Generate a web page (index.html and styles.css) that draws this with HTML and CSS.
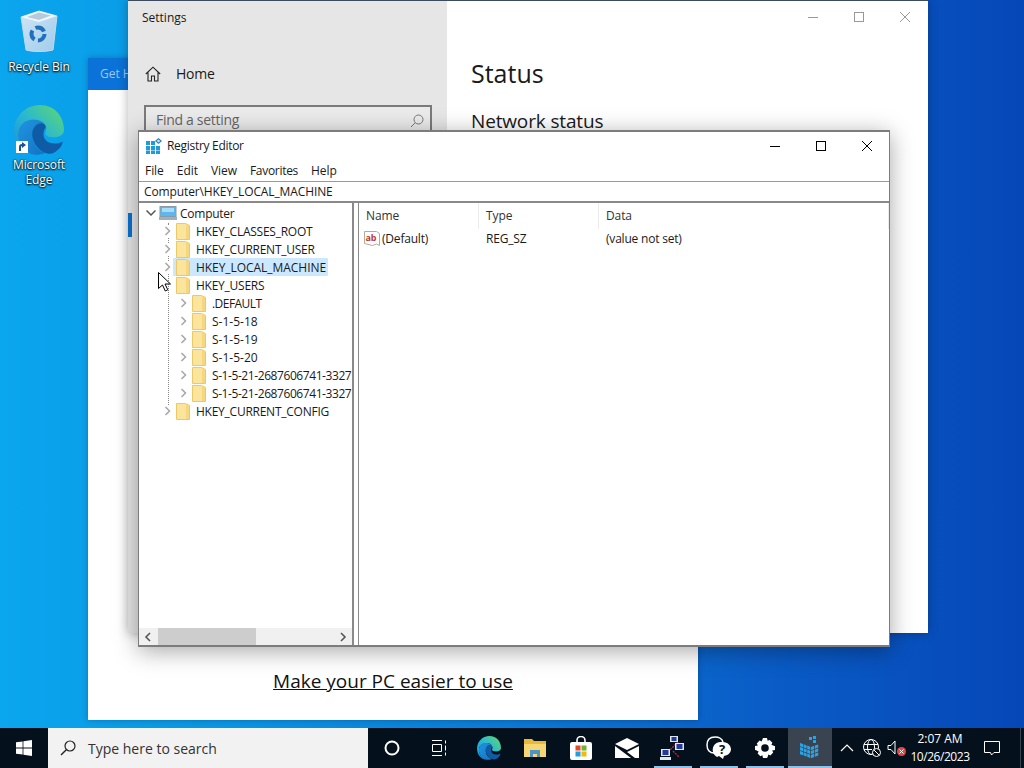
FILE: index.html
```html
<!DOCTYPE html>
<html lang="en">
<head>
<meta charset="utf-8">
<title>Registry Editor</title>
<link rel="stylesheet" href="styles.css">
</head>
<body>
<svg class="defs" width="0" height="0" aria-hidden="true">
  <defs>
    <linearGradient id="edgeTop" x1="0" y1="1" x2="1" y2="0"><stop offset="0" stop-color="#1a8fdc"/><stop offset=".5" stop-color="#2ab8d0"/><stop offset="1" stop-color="#62d96a"/></linearGradient>
    <linearGradient id="edgeLow" x1="0" y1="0" x2="1" y2="1"><stop offset="0" stop-color="#1f95e0"/><stop offset="1" stop-color="#1670c4"/></linearGradient>
    <linearGradient id="binG" x1="0" y1="0" x2="1" y2="1"><stop offset="0" stop-color="#cfe6f6"/><stop offset="1" stop-color="#9fcbea"/></linearGradient>
    <symbol id="edge" viewBox="0 0 48 48">
      <path fill="url(#edgeLow)" d="M4 26C5 19 11 14 18 14c7 0 13 4 13 9-5-4-11-3-13 3-2 8 3 17 12 20-5 2-10 2-14 1C8 43 3 35 4 26z"/>
      <path fill="#0f5ba6" d="M31 20c-3-4-9-3-12 2-4 7 0 18 9 23 4 2 9 3 13-1 3-2 5-5 6-9-2 1-5 2-8 2-9 0-14-7-8-17z"/>
      <path fill="url(#edgeTop)" d="M0 25C0 11 11 0 25 0c14 0 23 11 23 24 0 4-4 7-10 7-5 0-8-2-8-4 0-1 1-2 1-4 0-5-5-9-12-9C11 14 5 19 4 26c-1 9 4 17 12 21C7 45 0 36 0 25z"/>
    </symbol>
    <symbol id="folder" viewBox="0 0 14 18">
      <path fill="#fbe59c" stroke="#ecc968" d="M.5 1.500h9l4 2v14H.5z"/>
      <path fill="#f6d77f" d="M10 2l3 1.500V17h-3z"/>
    </symbol>
    <symbol id="chevR" viewBox="0 0 10 12"><path fill="none" stroke="#a6a6a6" stroke-width="1.500" d="M3.500 2 7.500 6 3.500 10"/></symbol>
  </defs>
</svg>

<main class="desktop">
  <div class="shortcut recycle">
    <svg class="bin" viewBox="0 0 42 44" width="42" height="44"><path fill="url(#binG)" stroke="#c2dbee" d="M3 8 21 2l18 5-4 34c-8 2-20 2-27 0z"/><path fill="#eef7fd" d="M3 8l18 5 18-6-18-5z"/><path fill="#7f9db8" d="M9 8l12 3 12-4.500-12-3z" opacity=".5"/><circle cx="20" cy="25" r="6.500" fill="none" stroke="#2070bc" stroke-width="4" stroke-dasharray="10 3.600"/></svg>
    <span class="label">Recycle Bin</span>
  </div>
  <div class="shortcut edgeapp">
    <span class="edgewrap">
      <svg class="edgeicon" width="50" height="50"><use href="#edge"/></svg>
      <svg class="arrowbadge" viewBox="0 0 12 12" width="12" height="12"><rect width="12" height="12" fill="#fff"/><path fill="#1a4f9c" d="M3 10V6c0-2 1-3 3-3V1l4 3-4 3V5C5 5 5 6 5 7v3z"/></svg>
    </span>
    <span class="label">Microsoft<br>Edge</span>
  </div>

  <section class="win helpwin">
    <header class="helphead">Get Help</header>
    <div class="helpbody"><a class="helplink">Make your PC easier to use</a></div>
  </section>

  <section class="win settings">
    <aside class="sidebar">
      <div class="settitle">Settings</div>
      <div class="home">
        <svg viewBox="0 0 16 16" width="16" height="16"><path fill="none" stroke="#222" stroke-width="1.100" d="M.8 8 8 1.200 15.200 8M3 6.500V15h3.500v-5h3v5H13V6.500"/></svg>
        <span>Home</span>
      </div>
      <div class="findbox">
        <span>Find a setting</span>
        <svg viewBox="0 0 14 14" width="14" height="14"><circle cx="8.500" cy="5.500" r="4.500" fill="none" stroke="#777"/><path stroke="#777" d="M5.300 8.700 1 13"/></svg>
      </div>
      <div class="navmark"></div>
    </aside>
    <div class="setmain">
      <div class="wincontrols light">
        <svg viewBox="0 0 46 12" width="46" height="12"><path stroke="#999" d="M18 6.500h10"/></svg>
        <svg viewBox="0 0 46 12" width="46" height="12"><rect x="18.500" y="1.500" width="9" height="9" fill="none" stroke="#999"/></svg>
        <svg viewBox="0 0 46 12" width="46" height="12"><path stroke="#999" d="M18 1l10 10M28 1 18 11"/></svg>
      </div>
      <h1 class="status">Status</h1>
      <h2 class="netstatus">Network status</h2>
    </div>
  </section>

  <section class="win regedit">
    <header class="regtitle">
      <svg viewBox="0 0 16 16" width="16" height="16"><g fill="#1f9bd8"><rect x="0" y="3" width="4" height="4"/><rect x="5" y="3" width="4" height="4"/><rect x="0" y="8" width="4" height="4"/><rect x="5" y="8" width="4" height="4"/><rect x="10" y="8" width="4" height="4"/><rect x="0" y="12.500" width="4" height="3.500"/><rect x="5" y="12.500" width="4" height="3.500"/><rect x="10" y="12.500" width="4" height="3.500"/></g><path fill="#2a7fb8" d="M12.500 0 16 3l-3.500 3L9 3z"/><path fill="#bfe8fa" d="M12.500 1.500 14.300 3l-1.800 1.500L10.700 3z"/></svg>
      <span class="regname">Registry Editor</span>
      <div class="wincontrols dark">
        <svg viewBox="0 0 46 12" width="46" height="12"><path stroke="#000" d="M18 6.500h10"/></svg>
        <svg viewBox="0 0 46 12" width="46" height="12"><rect x="18.500" y="1.500" width="9" height="9" fill="none" stroke="#000"/></svg>
        <svg viewBox="0 0 46 12" width="46" height="12"><path stroke="#000" d="M18 1l10 10M28 1 18 11"/></svg>
      </div>
    </header>
    <nav class="menu"><span>File</span><span>Edit</span><span>View</span><span class="fav">Favorites</span><span>Help</span></nav>
    <div class="address">Computer\HKEY_LOCAL_MACHINE</div>
    <div class="panes">
      <div class="treepane">
        <div class="tree">
          <span class="dots"></span>
          <div class="row lvl0">
            <svg class="chev" viewBox="0 0 10 12" width="10" height="12"><path fill="none" stroke="#555" stroke-width="1.500" d="M.5 3.500 5 8l4.500-4.500"/></svg>
            <span class="node">
              <svg class="pc" viewBox="0 0 18 14" width="18" height="14"><rect x="1" y=".5" width="16" height="10" fill="#5bb7ec" stroke="#8a9aa8"/><rect x="3" y="2" width="12" height="4" fill="#a7dcf7"/><rect x="0" y="11" width="18" height="3" fill="#9fb1bf"/></svg>
              <span>Computer</span>
            </span>
          </div>
          <div class="row lvl1"><svg class="chev" width="10" height="12"><use href="#chevR"/></svg><span class="node"><svg class="fold" width="14" height="18"><use href="#folder"/></svg><span>HKEY_CLASSES_ROOT</span></span></div>
          <div class="row lvl1"><svg class="chev" width="10" height="12"><use href="#chevR"/></svg><span class="node"><svg class="fold" width="14" height="18"><use href="#folder"/></svg><span>HKEY_CURRENT_USER</span></span></div>
          <div class="row lvl1"><svg class="chev" width="10" height="12"><use href="#chevR"/></svg><span class="node selected"><svg class="fold" width="14" height="18"><use href="#folder"/></svg><span>HKEY_LOCAL_MACHINE</span></span></div>
          <div class="row lvl1"><span class="chevgap"></span><span class="node"><svg class="fold" width="14" height="18"><use href="#folder"/></svg><span>HKEY_USERS</span></span></div>
          <div class="row lvl2"><svg class="chev" width="10" height="12"><use href="#chevR"/></svg><span class="node"><svg class="fold" width="14" height="18"><use href="#folder"/></svg><span class="dflt">.DEFAULT</span></span></div>
          <div class="row lvl2"><svg class="chev" width="10" height="12"><use href="#chevR"/></svg><span class="node"><svg class="fold" width="14" height="18"><use href="#folder"/></svg><span class="sid">S-1-5-18</span></span></div>
          <div class="row lvl2"><svg class="chev" width="10" height="12"><use href="#chevR"/></svg><span class="node"><svg class="fold" width="14" height="18"><use href="#folder"/></svg><span class="sid">S-1-5-19</span></span></div>
          <div class="row lvl2"><svg class="chev" width="10" height="12"><use href="#chevR"/></svg><span class="node"><svg class="fold" width="14" height="18"><use href="#folder"/></svg><span class="sid">S-1-5-20</span></span></div>
          <div class="row lvl2"><svg class="chev" width="10" height="12"><use href="#chevR"/></svg><span class="node"><svg class="fold" width="14" height="18"><use href="#folder"/></svg><span class="longsid">S-1-5-21-2687606741-3327</span></span></div>
          <div class="row lvl2"><svg class="chev" width="10" height="12"><use href="#chevR"/></svg><span class="node"><svg class="fold" width="14" height="18"><use href="#folder"/></svg><span class="longsid">S-1-5-21-2687606741-3327</span></span></div>
          <div class="row lvl1"><svg class="chev" width="10" height="12"><use href="#chevR"/></svg><span class="node"><svg class="fold" width="14" height="18"><use href="#folder"/></svg><span>HKEY_CURRENT_CONFIG</span></span></div>
        </div>
        <div class="hscroll">
          <svg viewBox="0 0 8 10" width="8" height="10"><path fill="none" stroke="#555" stroke-width="1.600" d="M6 1 2 5l4 4"/></svg>
          <div class="track"><div class="thumb"></div></div>
          <svg viewBox="0 0 8 10" width="8" height="10"><path fill="none" stroke="#555" stroke-width="1.600" d="M2 1l4 4-4 4"/></svg>
        </div>
      </div>
      <div class="listpane">
        <div class="listhead"><span>Name</span><span>Type</span><span>Data</span></div>
        <div class="listrow">
          <span class="namecell">
            <svg viewBox="0 0 16 16" width="16" height="16"><path fill="#fff" stroke="#b9a79c" d="M.5 1.500h12l3 2v12l-3-1.500-4 1.500-8-2z"/><text class="abtext" x="1.500" y="10.500">ab</text></svg>
            <span>(Default)</span>
          </span>
          <span>REG_SZ</span>
          <span>(value not set)</span>
        </div>
      </div>
    </div>
  </section>

  <svg class="cursor" viewBox="0 0 13 20" width="13" height="20"><path fill="#fff" stroke="#000" d="M.5.500v16l4-3.500 2.800 6 2.500-1.200L7 12h5.500z"/></svg>
</main>

<footer class="taskbar">
  <div class="start"><svg viewBox="0 0 16 16" width="16" height="16"><path fill="#fff" d="M0 2.300 6.600 1.400V7.600H0zM7.400 1.300 16 0V7.600H7.400zM0 8.400H6.600V14.600L0 13.700zM7.400 8.400H16V16L7.400 14.700z"/></svg></div>
  <div class="search">
    <svg viewBox="0 0 16 16" width="16" height="16"><circle cx="10" cy="6" r="5" fill="none" stroke="#222" stroke-width="1.200"/><path stroke="#222" stroke-width="1.400" d="M6.300 9.700 1 15"/></svg>
    <span>Type here to search</span>
  </div>
  <div class="tasks">
    <div class="tb cortana"><svg viewBox="0 0 16 16" width="16" height="16"><circle cx="8" cy="8" r="6.500" fill="none" stroke="#fff" stroke-width="2"/></svg></div>
    <div class="tb taskview"><svg viewBox="0 0 16 16" width="16" height="16"><path fill="none" stroke="#fff" d="M1 .5h10M1 15.500h10M1.500 4.500h9v7h-9zM14.500 .5v3M14.500 5.500v5M14.500 12.500v3"/></svg></div>
    <div class="tb edgetb"><svg width="24" height="24"><use href="#edge"/></svg></div>
    <div class="tb"><svg viewBox="0 0 24 20" width="24" height="20"><path fill="#e8b93a" d="M1 1h8l2 2h12v16H1z"/><path fill="#f7d774" d="M1 6h22v13H1z"/><path fill="#4d95c9" d="M7 12h10v7h-3v-3h-4v3H7z"/></svg></div>
    <div class="tb"><svg viewBox="0 0 24 24" width="24" height="24"><path fill="none" stroke="#fff" stroke-width="1.600" d="M8 7V4.500a4 4 0 0 1 8 0V7"/><rect x="1" y="6" width="22" height="18" rx="2" fill="#fff"/><rect x="6.500" y="9.500" width="5" height="5" fill="#e2492b"/><rect x="12.500" y="9.500" width="5" height="5" fill="#6fb52c"/><rect x="6.500" y="15.500" width="5" height="5" fill="#1f9fe0"/><rect x="12.500" y="15.500" width="5" height="5" fill="#f5b80c"/></svg></div>
    <div class="tb"><svg viewBox="0 0 24 20" width="24" height="20"><path fill="#fff" d="M0 6 12 0l12 6-12 6zM0 8l16 12H0zM24 8v12h-4L12 14z"/></svg></div>
    <div class="tb"><svg viewBox="0 0 26 24" width="26" height="24"><path stroke="#c0203a" stroke-width="1.400" stroke-dasharray="2 1" fill="none" d="M6 18 18 6M13 15l6 6"/><rect x="10" y="0" width="8" height="6" fill="#dfe7ef"/><rect x="11.500" y="1" width="5" height="4" fill="#223a9c"/><rect x="15" y="7" width="9" height="7" fill="#dfe7ef"/><rect x="16.500" y="8" width="6" height="5" fill="#223a9c"/><rect x="1" y="13" width="9" height="7" fill="#dfe7ef"/><rect x="2.500" y="14" width="6" height="5" fill="#223a9c"/><rect x="0" y="21" width="11" height="3" fill="#dfe7ef"/></svg></div>
    <div class="tb"><svg viewBox="0 0 26 24" width="26" height="24"><path fill="none" stroke="#fff" stroke-width="1.500" d="M8 17c-4 0-7-3-7-8s3-8 8-8c4 0 7 2 8 5"/><path fill="#fff" d="M16 6a8 8 0 0 0-5 15l2-1 4 3 1-3c5-1 7-4 7-7a8 8 0 0 0-9-7z"/><text class="qmark" x="16" y="18">?</text></svg></div>
    <div class="tb"><svg viewBox="0 0 20 20" width="20" height="20"><path fill="#fff" d="M8 0h4l.6 2.800 2-.9 2.800 2.800-1 2L19.300 8h.7v4l-2.800.6 1 2-2.800 2.800-2-1L12.500 19.300 12 20H8l-.6-2.800-2 1-2.800-2.800 1-2L.7 12H0V8l2.800-.6-1-2 2.800-2.800 2 1zM10 6.200a3.800 3.800 0 1 0 0 7.600 3.800 3.800 0 0 0 0-7.600z"/></svg></div>
    <div class="tb active"><svg viewBox="0 0 24 24" width="24" height="24"><g fill="#2aa4e8"><rect x="11" y="1" width="3" height="3"/><rect x="15" y="0" width="3" height="3"/><rect x="15" y="4" width="3" height="3"/><g transform="translate(2 7) skewY(20)"><rect x="0" y="0" width="3" height="3.200"/><rect x="3.600" y="0" width="3" height="3.200"/><rect x="7.200" y="0" width="3" height="3.200"/><rect x="0" y="4" width="3" height="3.200"/><rect x="3.600" y="4" width="3" height="3.200"/><rect x="7.200" y="4" width="3" height="3.200"/><rect x="0" y="8" width="3" height="3.200"/><rect x="3.600" y="8" width="3" height="3.200"/><rect x="7.200" y="8" width="3" height="3.200"/></g><g transform="translate(13 11) skewY(-20)"><rect x="0" y="0" width="3.200" height="3.200"/><rect x="4" y="0" width="3.200" height="3.200"/><rect x="0" y="4" width="3.200" height="3.200"/><rect x="4" y="4" width="3.200" height="3.200"/><rect x="0" y="8" width="3.200" height="3.200"/><rect x="4" y="8" width="3.200" height="3.200"/></g></g></svg></div>
  </div>
  <div class="tray">
    <svg class="traychev" viewBox="0 0 14 8" width="14" height="8"><path fill="none" stroke="#fff" stroke-width="1.200" d="M1 7l6-6 6 6"/></svg>
    <svg class="globe" viewBox="0 0 18 18" width="18" height="18"><g fill="none" stroke="#fff"><circle cx="8" cy="8" r="7.500"/><ellipse cx="8" cy="8" rx="3.500" ry="7.500"/><path d="M1 5.500h14M1 10.500h8"/></g><circle cx="13.500" cy="13.500" r="4" fill="#040d18" stroke="#fff"/><path stroke="#fff" d="M11 11l5 5"/></svg>
    <svg class="speaker" viewBox="0 0 20 18" width="20" height="18"><path fill="none" stroke="#fff" d="M1 6.500h3L8 2v13L4 10.500H1z"/><rect x="10" y="8" width="9" height="9" rx="4.500" fill="#e04848"/><path stroke="#fff" d="M12.500 10.500l4 4M16.500 10.500l-4 4"/></svg>
    <div class="clock"><span>2:07 AM</span><span class="date">10/26/2023</span></div>
    <svg class="notify" viewBox="0 0 16 16" width="16" height="16"><path fill="none" stroke="#fff" d="M.5 1.500h15v11H10L7.500 15l-1-2.500h-6z"/></svg>
    <span class="showdesk"></span>
  </div>
</footer>
</body>
</html>
```
FILE: styles.css
```css
* { box-sizing: border-box; }
html, body { margin: 0; height: 100%; }
body {
  width: 1024px;
  height: 768px;
  overflow: hidden;
  display: flex;
  flex-direction: column;
  font-family: "Open Sans", "Noto Sans", sans-serif;
  font-size: 12px;
  color: #1a1a1a;
}
.defs { position: absolute; }

.desktop {
  position: relative;
  flex: 1;
  overflow: hidden;
  background: linear-gradient(90deg, #0aa6ee 0%, #0a93e2 25%, #0a7ad6 50%, #0a5cc6 75%, #0647b8 100%);
}

.shortcut {
  position: absolute;
  left: 0;
  width: 78px;
  display: flex;
  flex-direction: column;
  align-items: center;
  color: #fff;
  text-align: center;
}
.shortcut .label { text-shadow: 0 1px 2px #000, 0 0 2px #000; font-size: 12px; line-height: 15px; letter-spacing: -.1px; }
.recycle { top: 9px; gap: 6px; }
.edgeapp { top: 105px; gap: 2px; }
.edgewrap { position: relative; display: block; height: 50px; }
.edgeicon { display: block; }
.arrowbadge { position: absolute; left: 2px; bottom: 2px; }

.win { position: absolute; }
.helpwin {
  left: 88px; top: 58px; width: 610px; height: 662px;
  background: #fff;
  display: flex;
  flex-direction: column;
  box-shadow: 0 0 6px rgba(0, 0, 0, .25);
}
.helphead {
  height: 32px;
  background: #0a72d8;
  color: #9cc8f2;
  padding-left: 12px;
  line-height: 32px;
}
.helpbody {
  flex: 1;
  display: flex;
  align-items: flex-end;
  justify-content: center;
  padding: 0 0 24px;
}
.helplink { font-size: 19px; line-height: 30px; text-decoration: underline; color: #111; }

.settings {
  left: 128px; top: 0; width: 800px; height: 633px;
  display: flex;
  background: #fff;
  border-top: 1px solid #3c4a60;
  box-shadow: 0 0 10px rgba(0, 0, 0, .3);
}
.sidebar {
  width: 319px;
  background: #e6e6e6;
  position: relative;
  padding-left: 16px;
}
.settitle { padding-top: 9px; margin-left: -2px; line-height: 16px; }
.home {
  margin-top: 38px;
  display: flex;
  align-items: center;
  gap: 15px;
  font-size: 14px;
  letter-spacing: -.25px;
  padding-left: 1px;
  line-height: 20px;
}
.findbox {
  margin-top: 21px;
  width: 288px;
  height: 32px;
  border: 2px solid #7a7a7a;
  background: #ebebeb;
  display: flex;
  align-items: center;
  justify-content: space-between;
  padding: 0 6px 0 10px;
  font-size: 14px;
  letter-spacing: -.3px;
  color: #666;
}
.findbox span { position: relative; top: -2px; }
.navmark {
  position: absolute;
  left: 0; top: 212px;
  width: 4px; height: 24px;
  background: #0a72d0;
}
.setmain { flex: 1; padding-left: 24px; position: relative; }
.wincontrols { display: flex; }
.wincontrols svg { display: block; }
.light { position: absolute; right: 0; top: 10px; }
.status { margin: 0; padding-top: 54px; font-weight: 400; font-size: 25px; line-height: 36px; }
.netstatus { margin: 16px 0 0; font-weight: 400; font-size: 19px; line-height: 28px; letter-spacing: -.15px; }

.regedit {
  left: 138px; top: 130px; width: 752px; height: 517px;
  background: #fff;
  border: 2px solid #7c7c7c;
  border-width: 2px 1px 2px 1px;
  box-shadow: 0 4px 22px rgba(0, 0, 0, .35);
  display: flex;
  flex-direction: column;
}
.regtitle {
  height: 27px;
  display: flex;
  align-items: center;
  padding-left: 7px;
  flex: none;
}
.regname { margin-left: 5px; flex: 1; letter-spacing: -.3px; }
.regtitle .wincontrols { margin-right: -1px; }
.menu {
  height: 22px;
  flex: none;
  display: flex;
  gap: 13px;
  align-items: center;
  padding-left: 6px;
  letter-spacing: -.05px;
}
.fav { letter-spacing: -.3px; }
.address {
  flex: none;
  height: 22px;
  line-height: 19px;
  padding-left: 5px;
  letter-spacing: -.12px;
  border-top: 1px solid #9a9a9a;
  border-bottom: 2px solid #8a8a8a;
}
.panes { flex: 1; min-height: 0; display: flex; }
.treepane {
  width: 215px;
  border-right: 2px solid #8a8a8a;
  display: flex;
  flex-direction: column;
  overflow: hidden;
}
.tree { flex: 1; position: relative; padding-top: 1px; overflow: hidden; letter-spacing: -.25px; }
.dots {
  position: absolute;
  left: 29px; top: 20px;
  height: 184px;
  border-left: 1px dotted #888;
}
.row { height: 18px; display: flex; align-items: center; white-space: nowrap; position: relative; }
.lvl0 { padding-left: 7px; }
.lvl1 { padding-left: 23px; }
.lvl2 { padding-left: 39px; }
.chev, .chevgap { width: 10px; flex: none; background: #fff; }
.node { display: inline-flex; align-items: center; height: 18px; gap: 6px; padding-right: 2px; margin-left: 4px; }
.lvl0 .node { margin-left: 3px; gap: 3px; }
.selected { background: #cce8ff; border-radius: 1px; margin-left: 1px; padding-left: 3px; letter-spacing: -.05px; }
.dflt { letter-spacing: -.55px; }
.sid { letter-spacing: 0; }
.longsid { letter-spacing: -.42px; }
.hscroll {
  height: 17px;
  flex: none;
  background: #f0f0f0;
  display: flex;
  align-items: center;
  padding: 0 5px;
  gap: 6px;
}
.track { flex: 1; height: 100%; }
.thumb { width: 98px; height: 100%; background: #cdcdcd; }
.listpane {
  flex: 1;
  margin-left: 4px;
  border-left: 1px solid #8a8a8a;
  letter-spacing: -.2px;
}
.listhead, .listrow { display: grid; grid-template-columns: 120px 120px 1fr; }
.listhead { height: 26px; color: #333; letter-spacing: -.1px; }
.listhead span { padding-left: 7px; line-height: 26px; border-right: 1px solid #ececec; }
.listrow { height: 18px; align-items: center; }
.listrow > span { padding-left: 7px; }
.listrow .namecell { display: flex; align-items: center; gap: 2px; padding-left: 5px; }
.abtext { font-size: 9px; font-weight: 700; fill: #c0392b; }

.cursor { position: absolute; left: 158px; top: 272px; }

.taskbar {
  height: 40px;
  flex: none;
  background: #04101c;
  display: flex;
  color: #fff;
}
.start { width: 48px; display: flex; align-items: center; justify-content: center; }
.search {
  width: 320px;
  background: #f2f2f2;
  color: #333;
  display: flex;
  align-items: center;
  padding-left: 12px;
  gap: 12px;
  font-size: 14px;
}
.tasks { display: flex; padding-left: 1px; }
.tb { width: 46px; display: flex; align-items: center; justify-content: center; position: relative; }
.taskview { width: 48px; }
.edgetb { width: 46px; margin-left: 3px; }
.active { background: #3a4450; width: 44px; }
.tb:nth-child(7)::after, .tb:nth-child(8)::after, .tb:nth-child(9)::after, .active::after {
  content: "";
  position: absolute;
  left: 4px; right: 4px; bottom: 0;
  height: 2px;
  background: #8fc0e8;
}
.active::after { left: 0; right: 0; }
.qmark { font-size: 13px; font-weight: 700; fill: #04101c; text-anchor: middle; }
.tray { flex: 1; display: flex; align-items: center; padding-left: 8px; }
.traychev { margin-right: 9px; }
.globe { margin-right: 6px; }
.clock {
  width: 68px;
  margin-left: -1px;
  display: flex;
  flex-direction: column;
  align-items: center;
  font-size: 12px;
  line-height: 18px;
}
.date { letter-spacing: -.45px; }
.notify { margin-left: 10px; }
.showdesk { margin-left: 20px; width: 1px; height: 100%; background: #3a4450; }
```
